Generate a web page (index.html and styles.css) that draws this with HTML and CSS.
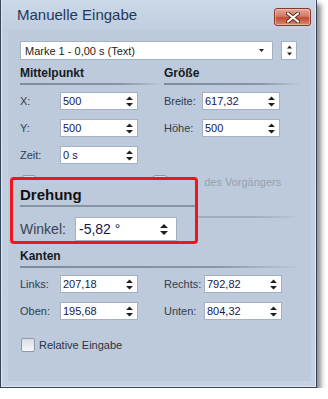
FILE: index.html
```html
<!DOCTYPE html>
<html lang="de">
<head>
    <meta charset="UTF-8">
    <title>Manuelle Eingabe</title>
    <link rel="stylesheet" href="styles.css">
</head>
<body>
    <div class="window">
        <div class="titlebar">
            <span class="title">Manuelle Eingabe</span>
            <div class="close">
                <svg width="14" height="11" viewBox="0 0 14 11">
                    <path d="M2 1.5L12 9.5M12 1.5L2 9.5" stroke="#5b2a22" stroke-width="4" stroke-linecap="round"/>
                    <path d="M2 1.5L12 9.5M12 1.5L2 9.5" stroke="#fff" stroke-width="2.2" stroke-linecap="round"/>
                </svg>
            </div>
        </div>

        <div class="client">
            <div class="marker-row">
                <div class="select">
                    <span>Marke 1 - 0,00 s (Text)</span>
                    <svg width="5" height="3" viewBox="0 0 5 3"><path d="M0 0h5L2.5 3z" fill="#222"/></svg>
                </div>
                <div class="spin-box">
                    <svg width="5" height="11" viewBox="0 0 5 11"><path d="M0 3.5h5L2.5 0.5zM0 7.5h5L2.5 10.5z" fill="#222"/></svg>
                </div>
            </div>

            <div class="columns">
                <div class="group">
                    <div class="group-title">Mittelpunkt</div>
                    <div class="field"><label>X:</label><div class="num">500<svg class="spin" width="7" height="11" viewBox="0 0 7 11"><path d="M0 4h7L3.5 0.5zM0 7h7L3.5 10.5z"/></svg></div></div>
                    <div class="field"><label>Y:</label><div class="num">500<svg class="spin" width="7" height="11" viewBox="0 0 7 11"><path d="M0 4h7L3.5 0.5zM0 7h7L3.5 10.5z"/></svg></div></div>
                    <div class="field"><label>Zeit:</label><div class="num">0 s<svg class="spin" width="7" height="11" viewBox="0 0 7 11"><path d="M0 4h7L3.5 0.5zM0 7h7L3.5 10.5z"/></svg></div></div>
                </div>
                <div class="group narrow">
                    <div class="group-title">Größe</div>
                    <div class="field"><label>Breite:</label><div class="num">617,32<svg class="spin" width="7" height="11" viewBox="0 0 7 11"><path d="M0 4h7L3.5 0.5zM0 7h7L3.5 10.5z"/></svg></div></div>
                    <div class="field"><label>Höhe:</label><div class="num">500<svg class="spin" width="7" height="11" viewBox="0 0 7 11"><path d="M0 4h7L3.5 0.5zM0 7h7L3.5 10.5z"/></svg></div></div>
                </div>
            </div>

            <!-- this part sits under the callout, only its edges show -->
            <div class="check-row disabled">
                <div class="check-item"><span class="checkbox"></span></div>
                <div class="check-item"><span class="checkbox"></span><span class="covered">Werte </span>des Vorgängers</div>
            </div>

            <div class="group-title rotation-title"><span class="covered">Drehung</span></div>
            <div class="field covered"><label>Winkel:</label><div class="num">-5,82 °</div></div>

            <div class="group-title edges-title">Kanten</div>
            <div class="columns">
                <div class="group">
                    <div class="field"><label>Links:</label><div class="num">207,18<svg class="spin" width="7" height="11" viewBox="0 0 7 11"><path d="M0 4h7L3.5 0.5zM0 7h7L3.5 10.5z"/></svg></div></div>
                    <div class="field"><label>Oben:</label><div class="num">195,68<svg class="spin" width="7" height="11" viewBox="0 0 7 11"><path d="M0 4h7L3.5 0.5zM0 7h7L3.5 10.5z"/></svg></div></div>
                </div>
                <div class="group">
                    <div class="field"><label>Rechts:</label><div class="num">792,82<svg class="spin" width="7" height="11" viewBox="0 0 7 11"><path d="M0 4h7L3.5 0.5zM0 7h7L3.5 10.5z"/></svg></div></div>
                    <div class="field"><label>Unten:</label><div class="num">804,32<svg class="spin" width="7" height="11" viewBox="0 0 7 11"><path d="M0 4h7L3.5 0.5zM0 7h7L3.5 10.5z"/></svg></div></div>
                </div>
            </div>

            <div class="check-item relative"><span class="checkbox"></span>Relative Eingabe</div>

            <!-- zoomed callout over the rotation section -->
            <div class="callout">
                <div class="callout-title">Drehung</div>
                <div class="callout-field">
                    <label>Winkel:</label>
                    <div class="callout-num">-5,82 °<svg class="spin" width="8" height="13" viewBox="0 0 8 13"><path d="M0 5h8L4 1zM0 8h8L4 12z"/></svg></div>
                </div>
            </div>
        </div>
    </div>
</body>
</html>
```

FILE: styles.css
```css
body {
    margin: 0;
    background: #fff;
    font-family: "Liberation Sans", Arial, sans-serif;
    font-size: 11px;
    color: #333d4b;
}

.window {
    width: 317px;
    height: 388px;
    box-sizing: border-box;
    border: 1px solid #34435a;
    border-top: 0;
    display: flex;
    flex-direction: column;
    background: linear-gradient(#cbd8e7, #c0cee0 30px, #c4d1e1);
    box-shadow: 4px 4px 5px rgba(0,0,0,0.45), inset 1px 0 0 #dfe7f1, inset -1px -1px 0 #dfe7f1;
}

.titlebar {
    height: 29px;
    display: flex;
    align-items: flex-start;
    padding: 0 5px 0 16px;
}

.title {
    flex: 1;
    font-size: 15px;
    line-height: 17px;
    margin-top: 6px;
    color: #1e395b;
}

.close {
    width: 37px;
    height: 18px;
    margin-top: 8px;
    box-sizing: border-box;
    border: 1px solid #8a372b;
    border-radius: 3px;
    background: linear-gradient(#e5a99b, #d27a66 45%, #c24a35 55%, #d78a6f);
    box-shadow: inset 0 0 0 1px rgba(255,220,210,0.45);
    display: flex;
    align-items: center;
    justify-content: center;
}

.client {
    flex: 1;
    position: relative;
    margin: 0 5px 6px 7px;
    padding: 12px 10px 0 12px;
    background: #bccadb;
}

.marker-row {
    display: flex;
    gap: 8px;
}

.select {
    width: 253px;
    height: 19px;
    box-sizing: border-box;
    border: 1px solid #a3b1c2;
    background: #fff;
    display: flex;
    align-items: center;
    justify-content: space-between;
    padding: 0 8px 0 4px;
    color: #1c1c1c;
}

.spin-box {
    width: 16px;
    height: 19px;
    box-sizing: border-box;
    border: 1px solid #a3b1c2;
    background: #fff;
    display: flex;
    align-items: center;
    justify-content: center;
}

.columns {
    display: grid;
    grid-template-columns: 144px 1fr;
}

.group-title {
    font-weight: bold;
    font-size: 12px;
    line-height: 15px;
    height: 15px;
    color: #151a22;
    margin-top: 6px;
    padding: 0 0 4px 0;
    background: linear-gradient(to right, #7f8c9c, #8795a5 70%, rgba(135,149,165,0)) left bottom / 100% 2px no-repeat;
}

.field {
    display: flex;
    align-items: center;
    height: 18px;
    margin-top: 7px;
}

.group .field + .field {
    margin-top: 9px;
}

.field label {
    width: 40px;
}

.narrow .field label {
    width: 38px;
}

.num {
    width: 78px;
    height: 18px;
    box-sizing: border-box;
    border: 1px solid #a3b1c2;
    background: #fff;
    color: #14184f;
    display: flex;
    align-items: center;
    justify-content: space-between;
    padding: 0 4px 0 2px;
}

.spin {
    fill: #1f1f1f;
}

.covered {
    visibility: hidden;
}

.check-row {
    display: grid;
    grid-template-columns: 131px 1fr;
    margin: 11px 0 0 2px;
}

.check-item {
    display: flex;
    align-items: center;
    gap: 4px;
    height: 14px;
}

.disabled {
    color: #95a2b2;
}

.checkbox {
    width: 14px;
    height: 14px;
    box-sizing: border-box;
    border: 1px solid #8e9aaa;
    border-radius: 2px;
    background: linear-gradient(#d9dfe7, #f4f6f9);
}

.rotation-title {
    margin-top: 10px;
    background-image: linear-gradient(to right, #a3afbd, #a3afbd 85%, rgba(163,175,189,0));
}

.edges-title {
    margin-top: 6px;
}

.relative {
    margin: 18px 0 0 1px;
    color: #2a3442;
}

/* highlighted, enlarged rotation box */
.callout {
    position: absolute;
    left: 2px;
    top: 148px;
    width: 188px;
    height: 67px;
    box-sizing: border-box;
    border: 3px solid #f0141c;
    border-radius: 4px;
    background: #bccadb;
    padding: 6px 0 0 7px;
}

.callout-title {
    font-weight: bold;
    font-size: 15px;
    line-height: 17px;
    color: #111;
    padding-bottom: 4px;
    background: linear-gradient(#8694a4, #8694a4) left bottom / 100% 2px no-repeat;
}

.callout-field {
    display: flex;
    align-items: center;
    margin-top: 10px;
    font-size: 14px;
    color: #394354;
}

.callout-field label {
    width: 55px;
}

.callout-num {
    width: 102px;
    height: 24px;
    box-sizing: border-box;
    border: 1px solid #a3b1c2;
    background: #fff;
    color: #14184f;
    display: flex;
    align-items: center;
    justify-content: space-between;
    padding: 0 8px 0 3px;
}
```
